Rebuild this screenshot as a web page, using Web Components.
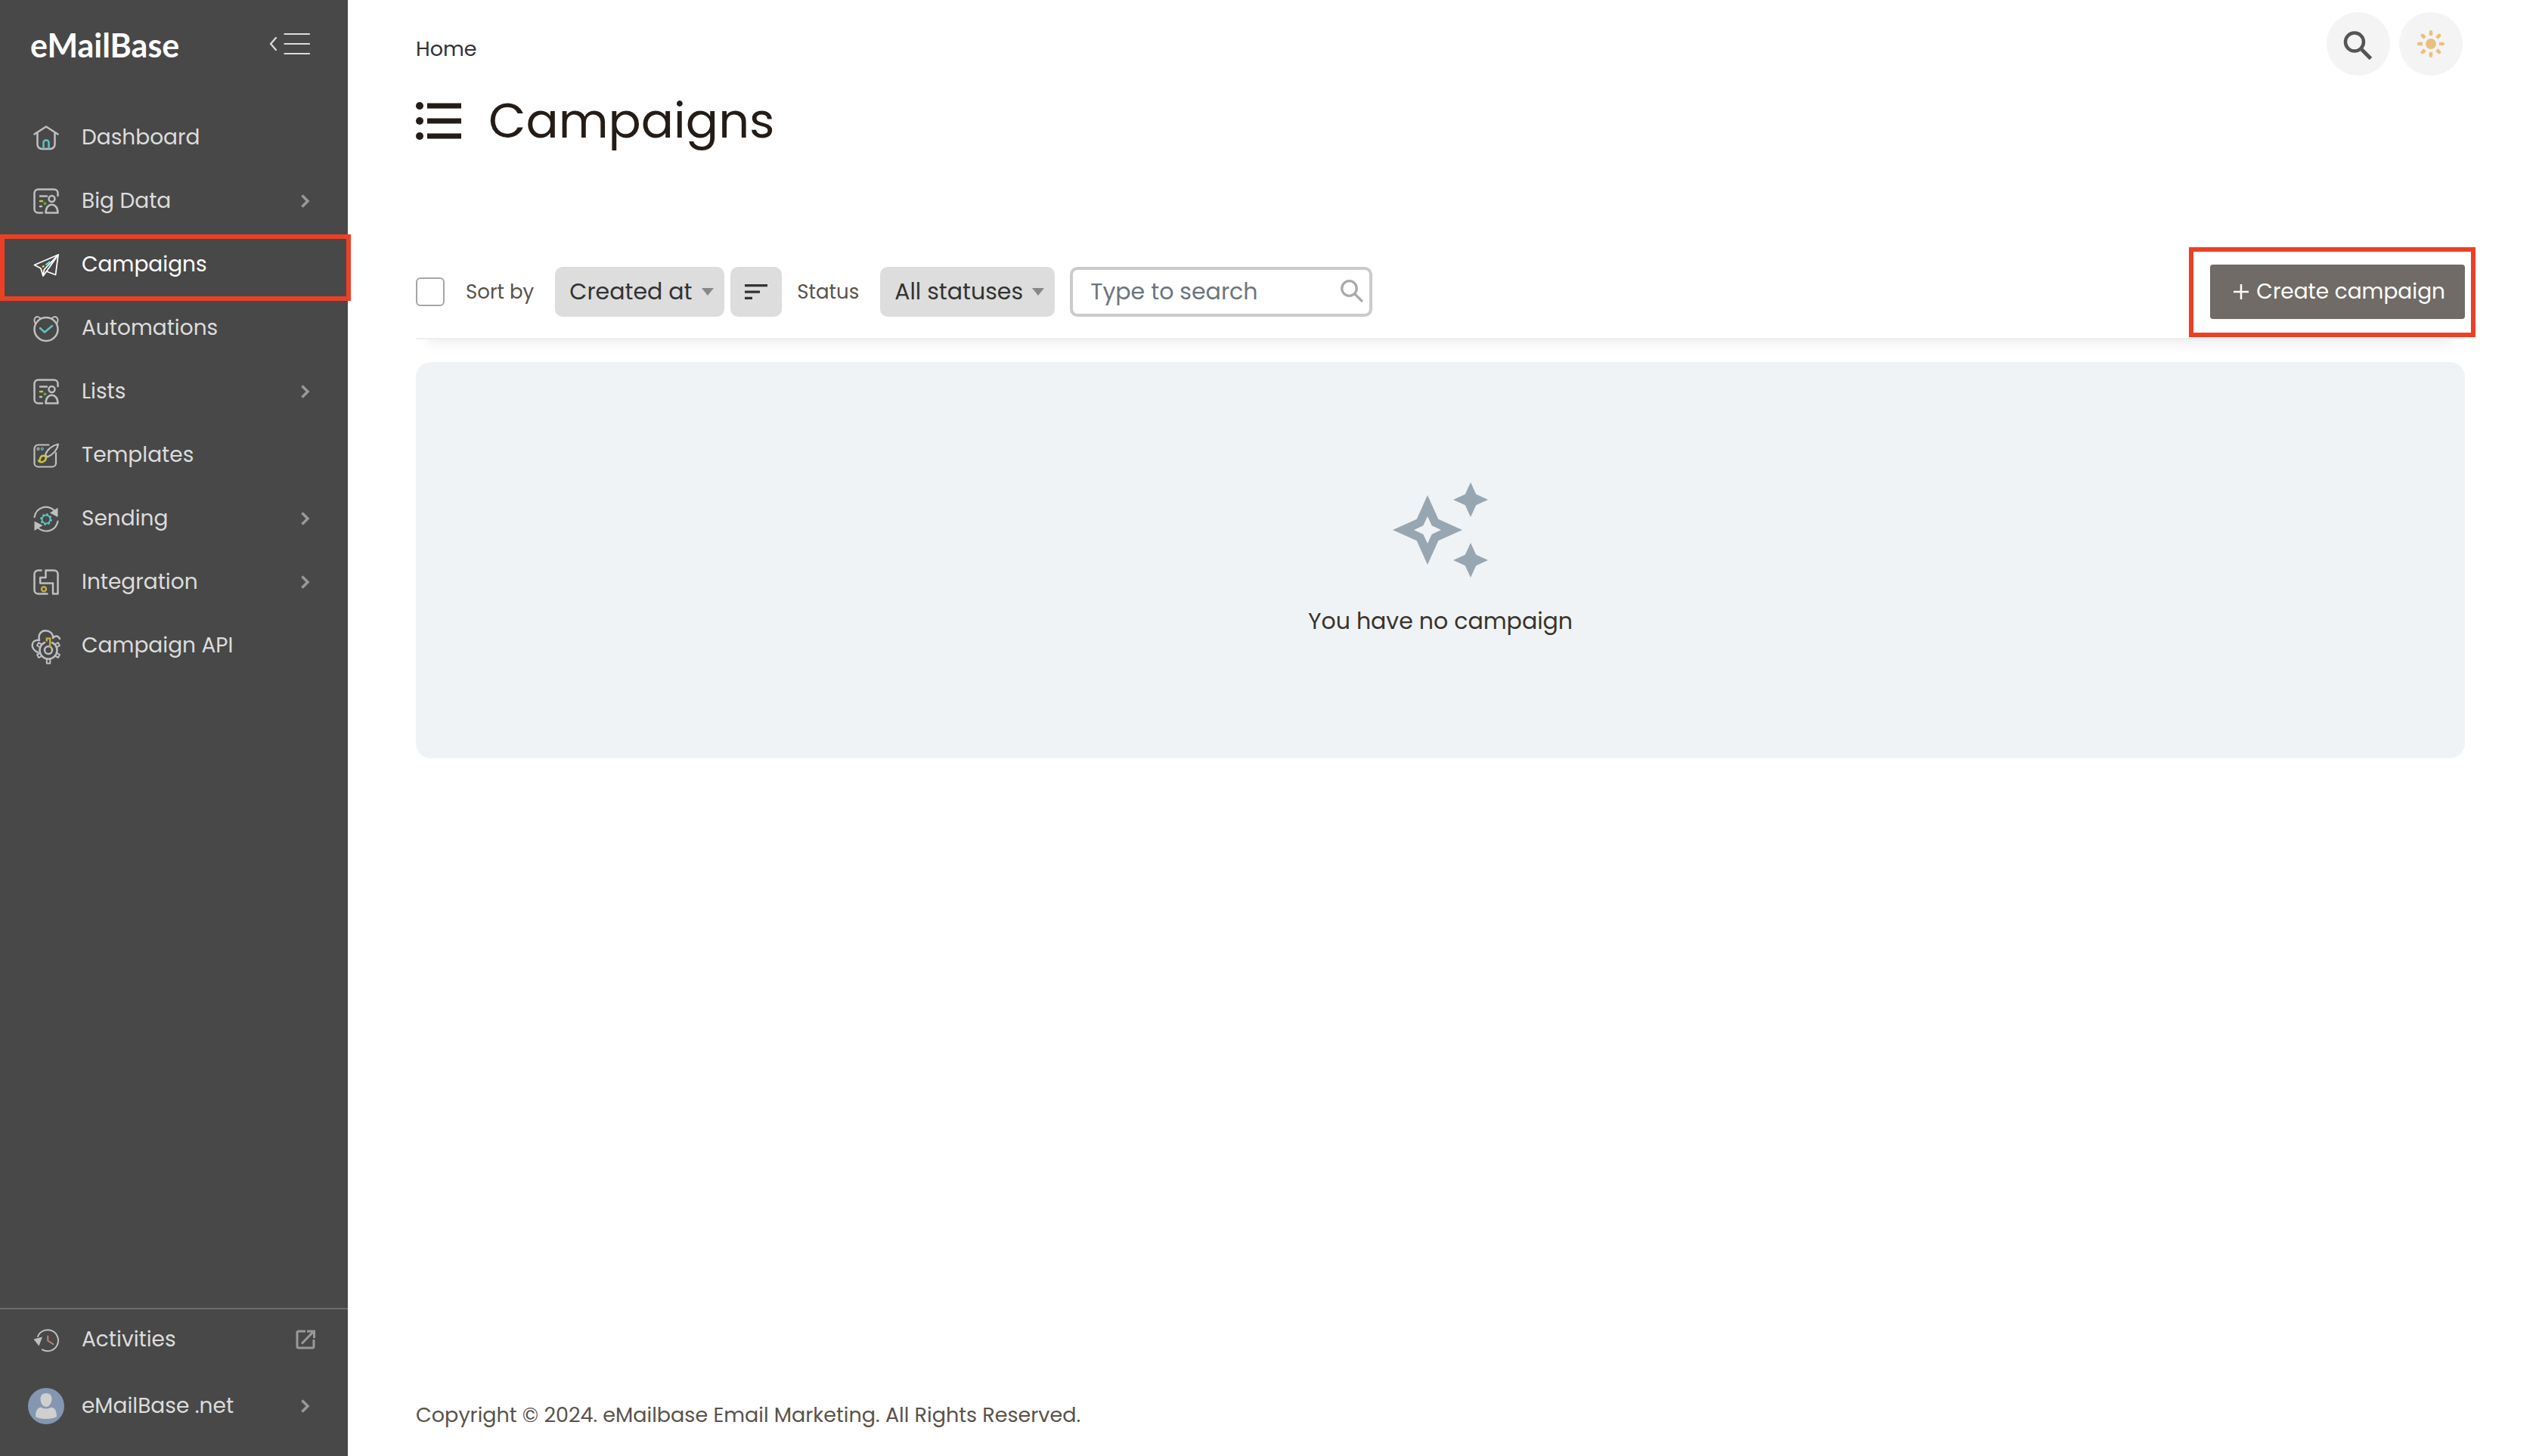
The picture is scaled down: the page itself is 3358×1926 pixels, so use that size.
<!DOCTYPE html>
<html lang="en">
<head>
<meta charset="utf-8">
<title>Campaigns - eMailBase</title>
<style>
    body {
        margin: 0;
        font-family: Poppins, Inter, sans-serif;
        font-size: 28px;
        line-height: 40px;
        color: #231c17;
        background: #fff;
        --mark: #eb4025;
        --muted: #5a524a;
    }
</style>
</head>
<body>
<app-shell>
    <side-bar slot="sidebar">
        <nav-item icon="home">Dashboard</nav-item>
        <nav-item icon="list" arrow>Big Data</nav-item>
        <nav-item icon="plane" active marked>Campaigns</nav-item>
        <nav-item icon="clock">Automations</nav-item>
        <nav-item icon="list" arrow>Lists</nav-item>
        <nav-item icon="template">Templates</nav-item>
        <nav-item icon="sending" arrow>Sending</nav-item>
        <nav-item icon="integration" arrow>Integration</nav-item>
        <nav-item icon="api">Campaign API</nav-item>
        <nav-item slot="bottom" icon="history" external>Activities</nav-item>
        <nav-item slot="bottom" icon="avatar" arrow tall>eMailBase .net</nav-item>
    </side-bar>
    <page-header>
        <a slot="breadcrumb" href="#">Home</a>
        Campaigns
    </page-header>
    <list-toolbar></list-toolbar>
    <empty-state>You have no campaign</empty-state>
    <page-footer>Copyright © 2024. eMailbase Email Marketing. All Rights Reserved.</page-footer>
</app-shell>

<script>
const ICONS = {
    home: `<path d="M1.5 12.5 17 2.5l15.500 10M5.500 10.500V26a6 6 0 0 0 6 6h11a6 6 0 0 0 6-6V10.500"/>
        <path stroke="#63bfc0" d="M13.500 31v-7.500a3 3 0 0 1 3-3h1a3 3 0 0 1 3 3V31"/>`,
    list: `<path d="M32.500 10V6.500a5 5 0 0 0-5-5h-21a5 5 0 0 0-5 5v21a5 5 0 0 0 5 5H12"/>
        <path d="M9 10.500h9M9 24h2"/>
        <path stroke="#c9c340" d="M9 17h3"/>
        <path fill="#5fb84a" stroke="none" d="m15.500 17.500 .8 1.700 1.900.2-1.400 1.300.4 1.900-1.700-1-1.700 1 .4-1.900-1.400-1.300 1.900-.2z"/>
        <circle cx="24.500" cy="14" r="4"/>
        <path d="M16.500 32.500c0-14.500 16-14.500 16 0z"/>`,
    plane: `<g stroke-width="1.800"><path d="M33 4 1.500 17.500 10 22l3 10 4.500-6L29.500 30.500z"/><path d="M33 4 17.500 26M33 4 14.500 23.500 13 31"/></g>
        <path stroke="#5ff0f5" stroke-width="2" d="m17 17 4.500-3.500"/>
        <path stroke="#f2e832" d="m13 19.500.5-.3"/>`,
    clock: `<circle cx="17" cy="18.500" r="15.500"/>
        <path stroke-width="2" d="M2.500 10.500C-.5 4 4 0 9 3.500M31.500 10.500C34.500 4 30 0 25 3.500"/>
        <path stroke="#63bfc0" d="m9 17 6 5.500L25 14"/>`,
    template: `<path stroke-width="2.200" d="M20.500 3.500h-14a5 5 0 0 0-5 5v19a5 5 0 0 0 5 5H25a5 5 0 0 0 5-5V14"/>
        <path stroke-width="2" d="M16 16.500C18 10 25 4 33 2.500 32 10 25.500 17 18.500 19.500z"/>
        <path stroke="#c9c340" d="M7 24.500c3 0 1-5.500 5-6.500s6 2.500 4 5.500-6 4-9 1z"/>
        <circle cx="6.500" cy="8.800" r="1.500" stroke-width="1.200"/>
        <circle cx="11.800" cy="8.800" r="1.500" stroke-width="1.200" stroke="#63bfc0"/>`,
    sending: `<path stroke-width="2.200" d="M1.500 15C4 1.500 18-2 27.500 6M32.500 20.500C30 33.500 16 37 6.500 29.500"/>
        <path fill="currentColor" stroke="none" d="M32.500 2.500v12.500L22 9.500zM1.500 33V20.500L12.500 26z"/>
        <circle cx="17" cy="18" r="5.500" stroke="#63bfc0" stroke-width="2"/>
        <circle cx="17" cy="18" r="7" stroke="#63bfc0" stroke-width="1.800" stroke-linecap="butt" stroke-dasharray="2.700 2.800"/>`,
    integration: `<path d="M10.500 1.500h-4a5 5 0 0 0-5 5v21a5 5 0 0 0 5 5h12"/>
        <path d="M16.500 1.500h11a5 5 0 0 1 5 5v26H26V18.500H9.200V11h7.300z"/>
        <circle cx="14" cy="26.300" r="3" stroke="#c4a93f"/>`,
    api: `<path d="M6 26C-5 21-3 8.500 8 10 4-7 27-6 26 7c3-4 7-3 9 1"/>
        <path d="M11 16a11.500 11.500 0 1 0 18 0M11 16a11.500 11.500 0 0 1 4-3M25 13a11.500 11.500 0 0 1 4 3"/>
        <circle cx="20" cy="23" r="5"/>
        <g stroke-width="2"><path d="M17.800 34v6.500h4.500V34"/>
        <path transform="rotate(60 20 23)" d="M17.800 34v5h4.500V34"/>
        <path transform="rotate(120 20 23)" d="M17.800 34v5h4.500V34"/>
        <path transform="rotate(240 20 23)" d="M17.800 34v5h4.500V34"/>
        <path transform="rotate(300 20 23)" d="M17.800 34v5h4.500V34"/></g>
        <path stroke="#c4a93f" stroke-linecap="butt" d="M17.800 11.500v-4h4.400v12"/>`,
    history: `<path stroke-width="2" d="M6 13a14 14 0 1 1 6 17.300"/>
        <path fill="currentColor" stroke="none" d="m.5 16.500 11.500-3L7.500 25.500z"/>
        <path stroke="#bf8480" stroke-width="2" d="M19.300 12.500v6l7 4.500"/>`
};

const CHEVRON = '<svg width="26" height="26" viewBox="0 0 26 26" fill="none" stroke="#999" stroke-width="3.500"><path d="m8.500 5.500 7.500 7.500-7.500 7.500"/></svg>';
const EXTERNAL = '<svg width="26" height="26" viewBox="0 0 26 26" fill="none" stroke="#999" stroke-width="3"><path d="M13 2H4a2 2 0 0 0-2 2v18a2 2 0 0 0 2 2h18a2 2 0 0 0 2-2v-9"/><path d="m8 18.500 14.500-15M15 2h9.500v9"/></svg>';
const AVATAR = '<svg width="48" height="48" viewBox="0 0 48 48"><circle cx="24" cy="24" r="24" fill="#8397b0"/><path fill="#cfcfcf" d="M24 7c5 0 7.500 3 7.500 7.500C31.500 20 28 25 24 25s-7.500-5-7.500-10.500C16.500 10 19 7 24 7zM17 25.500c4 2.500 10 2.500 14 0 4 .8 7 4 7 12.500-6 4-22 4-28 0 0-8.500 3-11.700 7-12.500z"/></svg>';

/** Two-column frame: sidebar on the left, page content on the right. */
class AppShell extends HTMLElement {
    constructor() {
        super();
        this.attachShadow({ mode: 'open' });
        this.shadowRoot.innerHTML = `
            <style>
                :host {
                    display: grid;
                    grid-template-columns: 460px 1fr;
                    min-height: 100vh;
                }

                main {
                    display: flex;
                    flex-direction: column;
                    padding: 16px 98px 34px 90px;
                }
            </style>
            <slot name="sidebar"></slot>
            <main><slot></slot></main>
        `;
    }
}

class SideBar extends HTMLElement {
    constructor() {
        super();
        this.attachShadow({ mode: 'open' });
        this.shadowRoot.innerHTML = `
            <style>
                :host {
                    display: flex;
                    flex-direction: column;
                    position: relative;
                    z-index: 1;
                    background: #484848;
                    color: #dcdcdc;
                }

                header {
                    display: flex;
                    align-items: center;
                    justify-content: space-between;
                    height: 116px;
                    padding: 0 50px 0 40px;
                    margin-bottom: 24px;
                }

                .logo {
                    padding-top: 4px;
                    font: 700 43px/52px Lato, sans-serif;
                    color: #fff;
                    text-decoration: none;
                }

                button {
                    display: flex;
                    padding: 0;
                    border: 0;
                    background: none;
                    color: #dcdcdc;
                }

                .bottom {
                    margin-top: auto;
                    padding-bottom: 18px;
                    border-top: 2px solid #6d6d6d;
                }
            </style>
            <header>
                <a class="logo" href="#">eMailBase</a>
                <button type="button" aria-label="Collapse menu">
                    <svg width="54" height="30" viewBox="0 0 54 30" fill="none" stroke="currentColor" stroke-width="2.200" stroke-linecap="round">
                        <path d="M9 7 2 15l7 8M20.500 2H53M20.500 15H53M20.500 28H53"/>
                    </svg>
                </button>
            </header>
            <nav><slot></slot></nav>
            <div class="bottom"><slot name="bottom"></slot></div>
        `;
    }
}

/** Sidebar row. Attributes: icon, arrow, external, active, marked, tall. */
class NavItem extends HTMLElement {
    constructor() {
        super();
        this.attachShadow({ mode: 'open' });
    }

    connectedCallback() {
        const name = this.getAttribute('icon');
        const icon = name === 'avatar'
            ? AVATAR
            : `<svg class="icon" width="34" height="34" viewBox="0 0 34 34">${ICONS[name]}</svg>`;
        let end = '';
        if (this.hasAttribute('arrow')) end = CHEVRON;
        if (this.hasAttribute('external')) end = EXTERNAL;

        this.shadowRoot.innerHTML = `
            <style>
                :host {
                    display: block;
                    position: relative;
                }

                a {
                    display: grid;
                    grid-template-columns: 48px 1fr auto;
                    align-items: center;
                    gap: 23px;
                    height: 84px;
                    padding: 0 43px 0 37px;
                    color: inherit;
                    text-decoration: none;
                }

                :host([slot="bottom"]) a {
                    height: 80px;
                }

                :host([tall]) a {
                    height: 96px;
                }

                svg {
                    display: block;
                    justify-self: center;
                }

                .icon {
                    overflow: visible;
                    color: #bfbfbf;
                    fill: none;
                    stroke: currentColor;
                    stroke-width: 2.500px;
                    stroke-linecap: round;
                    stroke-linejoin: round;
                }

                :host([active]) a,
                :host([active]) .icon {
                    color: #fff;
                }

                :host([marked])::after {
                    content: "";
                    position: absolute;
                    inset: 2px -4px -6px 0;
                    border: 6px solid var(--mark);
                    pointer-events: none;
                }
            </style>
            <a href="#">${icon}<span><slot></slot></span>${end}</a>
        `;
    }
}

class PageHeader extends HTMLElement {
    constructor() {
        super();
        this.attachShadow({ mode: 'open' });
        this.shadowRoot.innerHTML = `
            <style>
                :host {
                    display: flex;
                    justify-content: space-between;
                    align-items: flex-start;
                    margin-bottom: 148px;
                }

                .breadcrumb {
                    padding: 29px 0 33px;
                    font-size: 27px;
                }

                ::slotted(a) {
                    color: #333;
                    text-decoration: none;
                }

                h1 {
                    display: flex;
                    align-items: center;
                    gap: 36px;
                    margin: 0;
                    font-size: 64px;
                    font-weight: 400;
                    line-height: 84px;
                }

                .actions {
                    display: flex;
                    gap: 12px;
                    padding-right: 3px;
                }

                button {
                    display: grid;
                    place-items: center;
                    width: 84px;
                    height: 84px;
                    padding: 0;
                    border: 0;
                    border-radius: 50%;
                    background: #f4f4f4;
                }
            </style>
            <div>
                <div class="breadcrumb"><slot name="breadcrumb"></slot></div>
                <h1>
                    <svg width="60" height="50" viewBox="0 0 60 50" fill="#231c17">
                        <circle cx="5" cy="5" r="5"/><path d="M15 1.500h45v7H15z"/>
                        <circle cx="5" cy="25" r="5"/><path d="M15 21.500h45v7H15z"/>
                        <circle cx="5" cy="45" r="5"/><path d="M15 41.500h45v7H15z"/>
                    </svg>
                    <span><slot></slot></span>
                </h1>
            </div>
            <div class="actions">
                <button type="button" aria-label="Search">
                    <svg width="42" height="42" viewBox="0 0 42 42" fill="none" stroke="#555">
                        <circle cx="16" cy="18.500" r="12" stroke-width="4.500"/>
                        <path stroke-width="5" d="m25.500 28.500 12 12"/>
                    </svg>
                </button>
                <button type="button" aria-label="Light theme">
                    <svg width="42" height="42" viewBox="-21 -21 42 42" stroke="#e8c180" stroke-width="4.500">
                        <circle r="7" fill="#e8c180" stroke="none"/>
                        <path d="M0-11v-4M0 11v4M-11 0h-4M11 0h4M7.800-7.800l2.800-2.800M7.800 7.800l2.800 2.800M-7.800 7.800l-2.800 2.800M-7.800-7.800l-2.800-2.800"/>
                        <path stroke-linecap="round" d="M0-15v-.8M0 15v.8M-15 0h-.8M15 0h.8M10.600-10.600l.6-.6M10.600 10.600l.6.600M-10.600 10.600l-.6.600M-10.600-10.600l-.6-.6"/>
                    </svg>
                </button>
            </div>
        `;
    }
}

/** Sorting, status filter, search box and the create button. */
class ListToolbar extends HTMLElement {
    constructor() {
        super();
        this.attachShadow({ mode: 'open' });
        this.shadowRoot.innerHTML = `
            <style>
                :host {
                    display: flex;
                    align-items: center;
                    justify-content: space-between;
                    padding-bottom: 25px;
                    margin-bottom: 30px;
                    border-bottom: 2px solid #eee;
                    box-shadow: 0 20px 16px -16px rgba(0, 0, 0, .08);
                }

                .filters, .group {
                    display: flex;
                    align-items: center;
                }

                .filters {
                    gap: 20px;
                }

                .group {
                    gap: 28px;
                }

                .joined {
                    gap: 8px;
                }

                label {
                    font-size: 26px;
                    color: var(--muted);
                }

                select, input {
                    box-sizing: border-box;
                    margin: 0;
                    font: inherit;
                    font-size: 30px;
                }

                input[type="checkbox"] {
                    appearance: none;
                    width: 38px;
                    height: 38px;
                    border: 2px solid #a5a5a5;
                    border-radius: 6px;
                    background: #fff;
                }

                .select, .search, .create {
                    position: relative;
                }

                select {
                    appearance: none;
                    display: block;
                    height: 66px;
                    padding: 0 42px 0 19px;
                    border: 0;
                    border-radius: 10px;
                    background: #ddd;
                    color: #333;
                }

                .select::after {
                    content: "";
                    position: absolute;
                    top: 28px;
                    right: 14px;
                    border: 8px solid transparent;
                    border-top: 10px solid #888;
                    border-bottom: 0;
                    pointer-events: none;
                }

                .direction {
                    display: grid;
                    place-items: center;
                    width: 68px;
                    height: 66px;
                    padding: 0;
                    border: 0;
                    border-radius: 10px;
                    background: #ddd;
                }

                input[type="search"] {
                    appearance: none;
                    display: block;
                    width: 400px;
                    height: 66px;
                    padding: 0 56px 0 23px;
                    border: 4px solid #cbcbcb;
                    border-radius: 10px;
                    background: #fff;
                }

                input::placeholder {
                    color: #6c757d;
                    opacity: 1;
                }

                .search svg {
                    position: absolute;
                    top: 17px;
                    right: 12px;
                }

                .create button {
                    display: flex;
                    align-items: center;
                    gap: 9px;
                    height: 72px;
                    padding: 0 26px 0 30px;
                    border: 0;
                    border-radius: 4px;
                    background: #706b66;
                    font: inherit;
                    color: #fff;
                }

                .create::after {
                    content: "";
                    position: absolute;
                    inset: -23px -14px -24px -28px;
                    border: 6px solid var(--mark);
                    pointer-events: none;
                }
            </style>
            <div class="filters">
                <div class="group">
                    <input type="checkbox" aria-label="Select all">
                    <label for="sort">Sort by</label>
                    <div class="group joined">
                        <div class="select"><select id="sort"><option>Created at</option></select></div>
                        <button class="direction" type="button" aria-label="Sort direction">
                            <svg width="30" height="20" viewBox="0 0 30 20" fill="#333"><path d="M0 0h30v3.300H0zM0 8.500h20v3.300H0zM0 16.700h10V20H0z"/></svg>
                        </button>
                    </div>
                </div>
                <div class="group">
                    <label for="status">Status</label>
                    <div class="select"><select id="status"><option>All statuses</option></select></div>
                </div>
                <div class="search">
                    <input type="search" placeholder="Type to search" aria-label="Type to search">
                    <svg width="30" height="30" viewBox="0 0 30 30" fill="none" stroke="#aaa" stroke-width="3.300"><circle cx="11.500" cy="11.500" r="9.800"/><path d="m19 19 10 10"/></svg>
                </div>
            </div>
            <div class="create">
                <button type="button">
                    <svg width="22" height="22" viewBox="0 0 22 22" stroke="#fff" stroke-width="2.500"><path d="M11 1v20M1 11h20"/></svg>
                    <span>Create campaign</span>
                </button>
            </div>
        `;
    }
}

class EmptyState extends HTMLElement {
    constructor() {
        super();
        this.attachShadow({ mode: 'open' });
        this.shadowRoot.innerHTML = `
            <style>
                :host {
                    display: flex;
                    flex-direction: column;
                    align-items: center;
                    gap: 38px;
                    padding: 159px 0 161px;
                    border-radius: 20px;
                    background: #eff3f6;
                    font-size: 30px;
                    color: #3a332b;
                }
            </style>
            <svg width="126" height="126" viewBox="0 0 126 126" fill="#98a6b2">
                <path fill-rule="evenodd" d="M46 17 60.300 48.700 92 63 60.300 77.300 46 109 31.700 77.300 0 63l31.700-14.300zM46 45l-5.700 12.300L28 63l12.300 5.700L46 81l5.700-12.300L64 63l-12.300-5.700z"/>
                <path d="m103 0 7.200 15.800L126 23l-15.800 7.200L103 46l-7.200-15.800L80 23l15.800-7.200zM103 80l7.200 15.800L126 103l-15.800 7.200L103 126l-7.200-15.800L80 103l15.800-7.200z"/>
            </svg>
            <span><slot></slot></span>
        `;
    }
}

class PageFooter extends HTMLElement {
    constructor() {
        super();
        this.attachShadow({ mode: 'open' });
        this.shadowRoot.innerHTML = `
            <style>
                :host {
                    display: block;
                    margin-top: auto;
                    font-size: 27px;
                    color: var(--muted);
                }
            </style>
            <slot></slot>
        `;
    }
}

customElements.define('app-shell', AppShell);
customElements.define('side-bar', SideBar);
customElements.define('nav-item', NavItem);
customElements.define('page-header', PageHeader);
customElements.define('list-toolbar', ListToolbar);
customElements.define('empty-state', EmptyState);
customElements.define('page-footer', PageFooter);
</script>
</body>
</html>
